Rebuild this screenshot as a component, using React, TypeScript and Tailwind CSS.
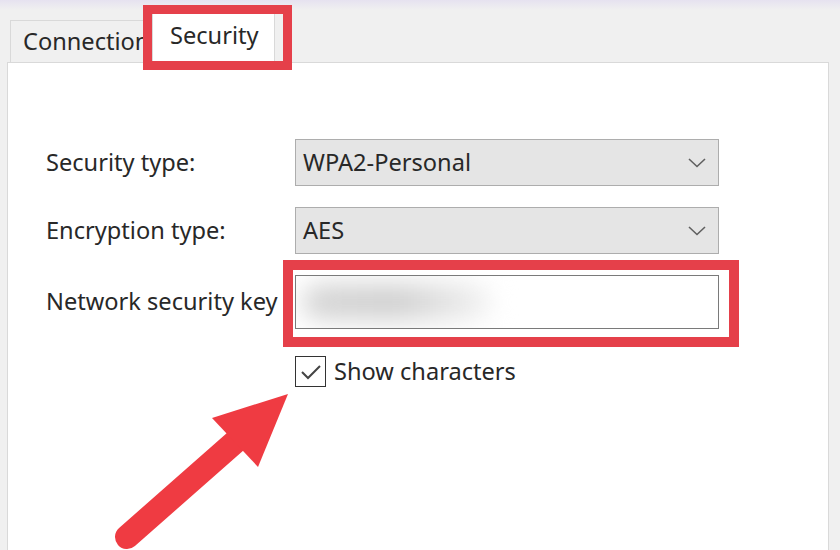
import React from "react";

const Chevron = () => (
  <svg width="18" height="10" viewBox="0 0 18 10" className="mr-[12px]">
    <path d="M1 1 L9 8.5 L17 1" fill="none" stroke="#606060" strokeWidth="1.6" />
  </svg>
);

const Select = ({ value }: { value: string }) => (
  <div className="w-[424px] h-[47px] bg-[#e5e5e5] border border-[#adadad] flex items-center justify-between pl-[7px]">
    <span>{value}</span>
    <Chevron />
  </div>
);

export default function App() {
  return (
    <div
      className="relative w-[840px] h-[550px] overflow-hidden bg-[#f0f0f0] text-[23.6px] text-[#282828]"
      style={{ fontFamily: '"Noto Sans", "Open Sans", sans-serif' }}
    >
      <div className="h-[10px] bg-gradient-to-b from-[#e6e2f0] to-[#f0f0f0]" />
      <div className="flex items-end h-[52px] pl-[10px]">
        <div className="w-[142px] h-[42px] bg-[#f0f0f0] border border-b-0 border-[#d9d9d9] flex items-center pl-[12px] overflow-hidden whitespace-nowrap">
          Connection
        </div>
        <div className="w-[123px] h-[53px] -mb-[1px] bg-white border border-b-0 border-[#d9d9d9] flex items-center pl-[17px] pb-[2px] relative z-10">
          Security
        </div>
      </div>
      <div className="ml-[7px] w-[822px] h-[500px] bg-white border border-[#d9d9d9] pt-[76px] pl-[38px]">
        <div className="flex flex-col gap-[21px]">
          <div className="flex items-center">
            <div className="w-[249px]">Security type:</div>
            <Select value="WPA2-Personal" />
          </div>
          <div className="flex items-center">
            <div className="w-[249px]">Encryption type:</div>
            <Select value="AES" />
          </div>
          <div className="flex items-center">
            <div className="w-[249px] whitespace-nowrap">Network security key</div>
            <div className="relative w-[424px] h-[54px] bg-white border border-[#7a7a7a] overflow-hidden">
              <div className="absolute left-[6px] top-[8px] w-[190px] h-[36px] bg-gradient-to-r from-[#d6d6d6] via-[#d0d0d0] to-[#f4f4f4] blur-md rounded-full" />
            </div>
          </div>
          <div className="flex items-center pl-[249px] mt-[4px]">
            <div className="w-[31px] h-[31px] border-[1.5px] border-[#333] flex items-center justify-center">
              <svg width="22" height="18" viewBox="0 0 22 18">
                <path d="M2 9 L8 15 L20 3" fill="none" stroke="#444" strokeWidth="2" />
              </svg>
            </div>
            <span className="ml-[8px]">Show characters</span>
          </div>
        </div>
      </div>

      {/* annotations */}
      <div className="absolute left-[143px] top-[5px] w-[149px] h-[65px] border-[9px] border-[#e5404a] z-20" />
      <div className="absolute left-[283px] top-[260px] w-[456px] h-[87px] border-[10px] border-[#e5404a] z-20" />
      <svg className="absolute left-0 top-0 z-20 pointer-events-none" width="840" height="550">
        <line x1="236" y1="441" x2="127" y2="537" stroke="#ef3b42" strokeWidth="24" strokeLinecap="round" />
        <polygon points="288,394 212,418 258,467" fill="#ef3b42" />
      </svg>
    </div>
  );
}
